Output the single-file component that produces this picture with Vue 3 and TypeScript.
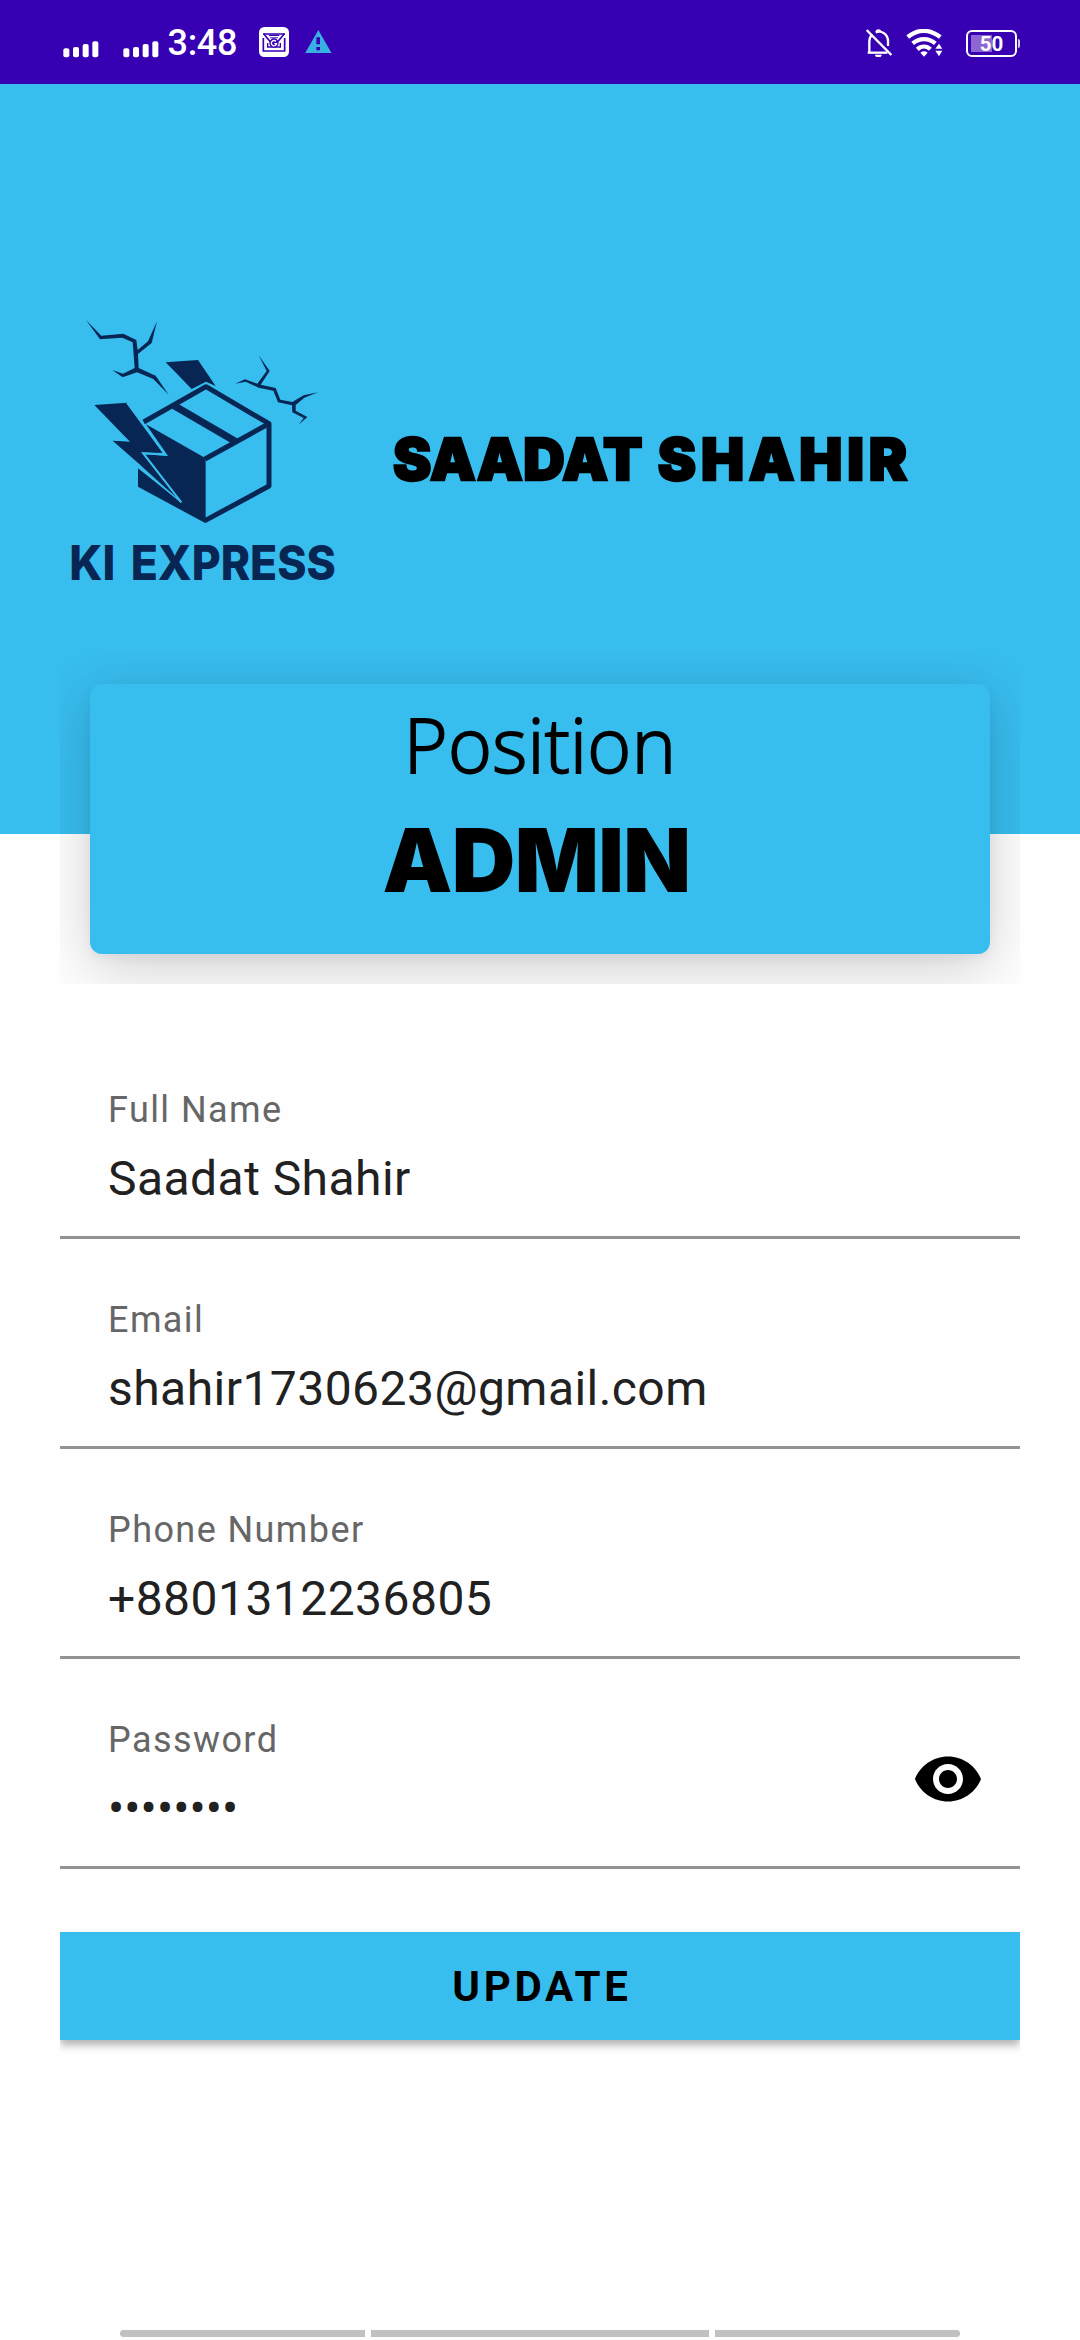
<script setup lang="ts">
interface Field {
  label: string
  value: string
  secret?: boolean
}

const fields: Field[] = [
  { label: 'Full Name', value: 'Saadat Shahir' },
  { label: 'Email', value: 'shahir1730623@gmail.com' },
  { label: 'Phone Number', value: '+8801312236805' },
  { label: 'Password', value: '••••••••', secret: true },
]
</script>

<template>
  <div class="screen">
    <div class="status">
      <svg v-for="n in 2" :key="n" class="signal" viewBox="0 0 108 54">
        <g fill="#fff">
          <rect x="1" y="25" width="18" height="27" rx="6" />
          <rect x="30" y="21" width="18" height="31" rx="6" />
          <rect x="59" y="12" width="18" height="40" rx="6" />
          <rect x="88" y="4" width="18" height="48" rx="6" />
        </g>
      </svg>
      <span class="time">3:48</span>
      <svg class="mail" viewBox="0 0 90 90">
        <rect width="90" height="90" rx="16" fill="#fff" />
        <path d="M12 21H78M13 33V72H77V33" fill="none" stroke="#3700b3" stroke-width="5" />
        <path d="M14 20L34 44M76 20L56 44" fill="none" stroke="#3700b3" stroke-width="5" />
        <path d="M26 48V60H64V48" fill="none" stroke="#3700b3" stroke-width="4" />
        <path d="M28 23H62L56 34H34Z" fill="#3700b3" />
        <path d="M30 29H60" stroke="#fff" stroke-width="4" />
        <circle cx="45" cy="48" r="14" fill="#3700b3" />
        <path d="M51 43A8 8 0 1 0 53 50H46" fill="none" stroke="#fff" stroke-width="4" />
      </svg>
      <svg class="warn" viewBox="0 0 80 70">
        <path d="M40 0L80 70H0Z" fill="#38b0e4" />
        <path d="M34 22H45V43H34ZM34 51H45V61H34Z" fill="#3700b3" />
      </svg>
      <span class="grow"></span>
      <svg class="bell" viewBox="0 0 80 86">
        <g fill="none" stroke="#fff" stroke-width="7">
          <path d="M10 69V37C10 29 13 22 19 17M29 10C46 3 66 15 66 37V51" />
          <path d="M5 71H64" />
          <path d="M2 3L76 78" />
        </g>
        <path d="M29 7C29-1 45-1 46 7ZM27 77H47C46 88 28 88 27 77Z" fill="#fff" />
      </svg>
      <svg class="wifi" viewBox="0 0 110 84">
        <g fill="none" stroke="#fff" stroke-width="13">
          <path d="M5 24C36 0 70 0 103 24" />
          <path d="M20 43C41 26 67 26 88 43" />
          <path d="M34 61C46 50 62 50 73 61" />
        </g>
        <path d="M43 71Q54 63 65 71L54 83Z" fill="#fff" />
        <path d="M99 44L109 59H88ZM88 65H109L99 82Z" fill="#fff" stroke="#3700b3" stroke-width="6" paint-order="stroke" />
      </svg>
      <div class="battery"><span>50</span></div>
    </div>

    <header class="hero">
      <div class="brand">
        <svg class="logo" viewBox="0 0 870 900">
          <g fill="#072654">
            <path d="M78 60L124 107 190 101 229 120 233 150 264 124 291 64 275 129 234 162 236 204 287 227 326 284 280 237 231 217 188 232 157 210 189 221 224 204 218 127 187 113 120 118Z" />
            <path d="M596 166L629 213 602 254 647 264 661 299 697 306 731 286 774 277 733 293 707 315 707 332 742 351 716 374 731 354 697 337 696 316 654 307 640 272 596 263 557 245 526 251 555 238 592 251 620 213Z" />
            <path d="M317 187L414 180 467 258 438 245 395 267Z" />
            <path d="M103 315L201 308 308 459 244 457 364 607 235 490 158 422 210 425Z" />
            <path d="M258 373L437 475V670L234 560V505L364 607 255 463 324 468Z" />
          </g>
          <g fill="none" stroke="#072654" stroke-width="15" stroke-linejoin="round">
            <path d="M251 366L438 260 627 371V558L435 662" />
            <path d="M435 477L627 371" />
            <path d="M342 317L526 424" stroke-width="22" />
          </g>
          <path d="M201 308L316 464 250 460 364 607" fill="none" stroke="#38bdef" stroke-width="6" />
          <path d="M364 607L234 500" fill="none" stroke="#38bdef" stroke-width="4" />
          <text x="28" y="840" textLength="138" lengthAdjust="spacingAndGlyphs">KI</text>
          <text x="212" y="840" textLength="616" lengthAdjust="spacingAndGlyphs">EXPRESS</text>
        </svg>
        <h1 class="owner"><span>SAADAT</span> <span class="last">SHAHIR</span></h1>
      </div>
    </header>

    <div class="card-area">
      <section class="card">
        <div class="position">Position</div>
        <div class="role">ADMIN</div>
      </section>
    </div>

    <main class="form">
      <div v-for="f in fields" :key="f.label" class="field">
        <div>
          <div class="label">{{ f.label }}</div>
          <div class="value" :class="{ secret: f.secret }">{{ f.value }}</div>
        </div>
        <svg v-if="f.secret" class="eye" viewBox="0 0 24 24">
          <path d="M12 4.5C7 4.5 2.73 7.61 1 12c1.73 4.39 6 7.5 11 7.5s9.27-3.11 11-7.5c-1.73-4.39-6-7.5-11-7.5zM12 17c-2.76 0-5-2.24-5-5s2.24-5 5-5 5 2.24 5 5-2.24 5-5 5zm0-8c-1.66 0-3 1.34-3 3s1.34 3 3 3 3-1.34 3-3-1.34-3-3-3z" />
        </svg>
      </div>
      <div class="update-wrap">
        <button class="update">UPDATE</button>
      </div>
    </main>

    <div class="nav"><i></i><i></i><i></i></div>
  </div>
</template>

<style>
body { margin: 0; background: #fefefe; }
</style>

<style scoped>
.screen {
  width: 1080px;
  height: 2340px;
  display: flex;
  flex-direction: column;
  overflow: hidden;
  background: #fefefe;
  font-family: Roboto, "Liberation Sans", sans-serif;
}
.status {
  height: 84px;
  flex: none;
  box-sizing: border-box;
  display: flex;
  align-items: flex-start;
  padding: 0 60px 0 62.5px;
  background: #3700b3;
  color: #fff;
}
.signal { width: 36px; height: 18px; margin: 39.5px 24px 0 0; }
.signal + .signal { margin-right: 9px; }
.time { font-size: 36px; line-height: 42px; font-weight: 500; margin-top: 22px; width: 71px; letter-spacing: -0.3px; }
.mail { width: 30px; height: 30px; margin: 27px 0 0 20px; }
.warn { width: 26.7px; height: 23.3px; margin: 30px 0 0 16.5px; }
.grow { flex: 1; }
.bell { width: 26.7px; height: 28.7px; margin: 28.5px 14px 0 0; }
.wifi { width: 36.7px; height: 28px; margin: 28.5px 23px 0 0; }
.battery {
  position: relative;
  width: 51px;
  height: 27px;
  box-sizing: border-box;
  margin: 30px 3px 0 0;
  border: 2px solid #fff;
  border-radius: 6px;
  display: flex;
  align-items: center;
  justify-content: center;
  background: linear-gradient(#8c66d2, #8c66d2) 3px 3px / 21px 17px no-repeat;
}
.battery::after {
  content: "";
  position: absolute;
  right: -5px;
  top: 7px;
  width: 2px;
  height: 9px;
  background: #d4c8f0;
  border-radius: 0 2px 2px 0;
}
.battery span { font-size: 20.5px; font-weight: 700; line-height: 24px; padding-top: 1px; }

.hero { height: 750px; flex: none; background: #38bdef; }
.brand { display: flex; padding: 216px 0 0 60px; }
.logo { width: 290px; height: 300px; flex: none; }
.logo text { font-family: Inter, sans-serif; font-weight: 800; font-size: 143px; fill: #072654; }
.owner {
  margin: 123px 0 0 43px;
  font-family: Inter, sans-serif;
  font-weight: 900;
  font-size: 57.5px;
  line-height: 72px;
  letter-spacing: 0.4px;
  white-space: nowrap;
  color: #000;
  -webkit-text-stroke: 2.4px #000;
}
.owner .last { letter-spacing: 4.8px; margin-left: 3px; }

.card-area {
  flex: none;
  z-index: 1;
  box-sizing: border-box;
  width: 960px;
  height: 330px;
  margin: -180px 60px 0;
  padding: 30px;
  overflow: hidden;
}
.card {
  height: 270px;
  border-radius: 12px;
  background: #38bdef;
  box-shadow: 0 14px 58px rgba(0, 0, 0, 0.19), 0 4px 12px rgba(0, 0, 0, 0.05);
  text-align: center;
  color: #000;
}
.position {
  font-family: "Open Sans", sans-serif;
  font-weight: 300;
  font-size: 75px;
  line-height: 90px;
  padding-top: 15px;
  letter-spacing: 0.3px;
  -webkit-text-stroke: 1.8px #000;
}
.role { font-family: Inter, sans-serif; font-weight: 900; font-size: 88px; line-height: 100px; padding-top: 21px; padding-right: 7px; letter-spacing: -0.6px; }

.form { padding: 45px 60px 0; }
.field {
  height: 210px;
  box-sizing: border-box;
  border-bottom: 3px solid #939393;
  padding: 60px 36px 0 48px;
  display: flex;
  justify-content: space-between;
}
.label { font-size: 36px; line-height: 42px; letter-spacing: 1.42px; color: #666; }
.value { font-size: 48px; line-height: 56px; margin-top: 20px; letter-spacing: 0.45px; color: #212121; }
.value.secret { letter-spacing: 0.1px; }
.eye { width: 72px; height: 72px; margin-top: 24px; fill: #000; }

.update-wrap { margin-top: 60px; padding: 3px 0 20px; overflow: hidden; }
.update {
  display: block;
  width: 100%;
  height: 108px;
  border: 0;
  padding: 0 0 0 4px;
  background: #38bdef;
  color: #000;
  font-family: Roboto, sans-serif;
  font-weight: 700;
  font-size: 42px;
  letter-spacing: 3.75px;
  box-shadow: 0 5px 8px rgba(0, 0, 0, 0.3);
}
.nav { display: flex; gap: 6px; margin: auto 120px 3px; }
.nav i { height: 7px; flex: 245; background: #c1c1c1; border-radius: 4px 0 0 4px; }
.nav i:nth-child(2) { flex: 338; border-radius: 0; }
.nav i:nth-child(3) { border-radius: 0 4px 4px 0; }
</style>
